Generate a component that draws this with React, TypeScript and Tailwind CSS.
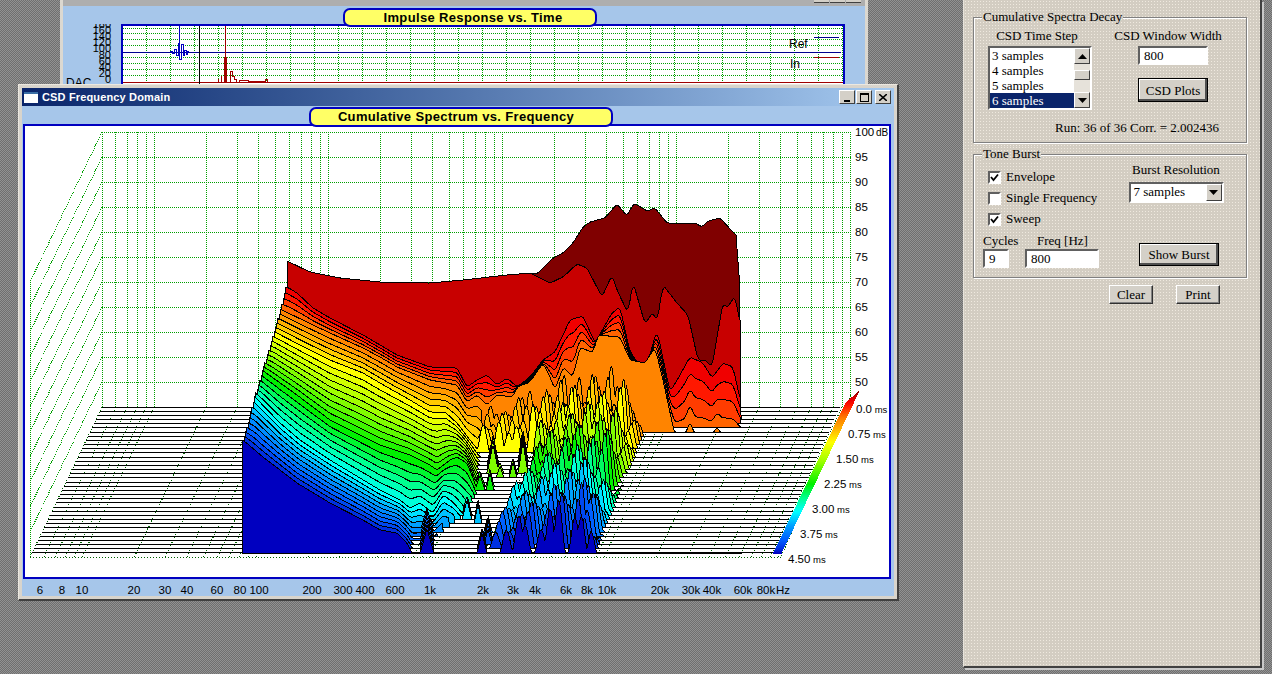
import type { ReactNode } from "react";

type Pt = [number, number];

const BLUE_DITHER = "bg-[#a6c6ea]";
const PANEL_BG =
  "bg-[radial-gradient(#efe9df_0.6px,#d3cdc2_0.6px)] bg-[length:3px_3px]";
const SERIF = "font-['Liberation_Serif',serif]";
const SANS = "font-['Liberation_Sans',sans-serif]";

/* ---------- waterfall data ---------- */

const floorY = (i: number) => 407 + i * 4.17;

// hand traced slices, screen coordinates
const KEYS: { i: number; pts: Pt[]; end: number }[] = [
  {
    i: 1,
    end: 740,
    pts: [
      [287, 261], [310, 272], [340, 278], [380, 282], [430, 283], [463, 280], [507, 275], [530, 273],
      [550, 283], [563, 277], [577, 264], [587, 268], [602, 297], [612, 275], [617, 290], [628, 313],
      [633, 282], [645, 324], [653, 312], [657, 322], [663, 285], [677, 303], [688, 315], [698, 360],
      [705, 360], [712, 367], [723, 302], [727, 308], [735, 296], [740, 323],
    ],
  },
  {
    i: 2,
    end: 741,
    pts: [
      [287, 287], [297, 293], [313, 308], [330, 318], [363, 335], [397, 355], [430, 367], [457, 368],
      [467, 387], [477, 380], [487, 375], [497, 385], [507, 378], [517, 387], [530, 377], [543, 360],
      [555, 352], [570, 320], [583, 316], [595, 343], [612, 313], [620, 307], [630, 352], [645, 372],
      [657, 330], [670, 392], [680, 375], [690, 357], [703, 363], [712, 378], [723, 363], [733, 367],
      [741, 403],
    ],
  },
  {
    i: 6,
    end: 741,
    pts: [
      [280, 309], [313, 325], [330, 333], [363, 348], [380, 357], [397, 367], [430, 380], [457, 385],
      [467, 402], [477, 395], [487, 405], [497, 395], [513, 397], [517, 387], [530, 382], [543, 363],
      [550, 377], [555, 390], [563, 367], [573, 377], [580, 347], [593, 353], [598, 335], [620, 337],
      [630, 360], [645, 363], [655, 347], [663, 380], [668, 403], [675, 436], [685, 436], [690, 420],
      [695, 436], [712, 436], [717, 426], [722, 436], [741, 436],
    ],
  },
  {
    i: 11,
    end: 482,
    pts: [
      [273, 331], [300, 345], [330, 360], [363, 373], [380, 383], [410, 400], [430, 412], [445, 412],
      [457, 423], [470, 440], [482, 455],
    ],
  },
  {
    i: 20,
    end: 478,
    pts: [
      [262, 370], [297, 395], [330, 420], [380, 445], [410, 455], [430, 465], [437, 470], [450, 460],
      [457, 457], [467, 463], [473, 478], [478, 492],
    ],
  },
  {
    i: 26,
    end: 466,
    pts: [
      [254, 396], [280, 423], [300, 440], [330, 460], [360, 478], [380, 490], [400, 500], [410, 508],
      [420, 503], [433, 513], [443, 495], [453, 502], [463, 514], [466, 520],
    ],
  },
  {
    i: 35,
    end: 414,
    pts: [
      [243, 440], [263, 457], [297, 483], [330, 503], [363, 520], [380, 530], [397, 533], [407, 543],
      [412, 553], [414, 556],
    ],
  },
];

const DARK_TOP: Pt[] = [
  [530, 273], [537, 274], [553, 258], [563, 253], [573, 243], [583, 227], [590, 222], [605, 218],
  [617, 204], [627, 216], [634, 203], [647, 211], [655, 208], [667, 223], [695, 223], [702, 227],
  [708, 221], [720, 218], [733, 232], [738, 237], [739, 300],
];

// isolated peaks standing on the floor: x, first slice, last slice, height, half width
const ISLANDS: [number, number, number, number, number][] = [
  [427, 30, 35, 24, 7], [482, 34, 35, 20, 5], [488, 30, 33, 16, 4], [480, 19, 20, 16, 5],
  [490, 19, 20, 18, 4], [493, 14, 16, 30, 6], [500, 16, 17, 12, 4], [513, 16, 17, 16, 4],
  [523, 13, 16, 32, 5], [467, 26, 27, 20, 5], [478, 27, 28, 20, 4], [430, 29, 29, 10, 5],
];

const STOPS: [number, number[]][] = [
  [0, [128, 0, 0]], [1, [200, 0, 0]], [2, [240, 0, 0]], [3, [255, 24, 0]], [4, [255, 60, 0]],
  [5, [255, 100, 0]], [6, [255, 132, 0]], [8, [255, 176, 0]], [11, [255, 255, 0]], [15, [160, 255, 0]],
  [20, [0, 240, 0]], [23, [0, 255, 144]], [26, [0, 255, 255]], [29, [0, 160, 255]], [32, [0, 96, 255]],
  [34, [0, 48, 224]], [35, [0, 0, 192]],
];

function sliceColor(t: number) {
  for (let k = 1; k < STOPS.length; k++) {
    if (t <= STOPS[k][0]) {
      const [a, ca] = STOPS[k - 1];
      const [b, cb] = STOPS[k];
      const f = (t - a) / (b - a);
      const c = ca.map((v, n) => Math.round(v + (cb[n] - v) * f));
      return `rgb(${c[0]},${c[1]},${c[2]})`;
    }
  }
  return "rgb(0,0,192)";
}

function sample(pts: Pt[], x: number) {
  if (x <= pts[0][0]) return pts[0][1];
  for (let k = 1; k < pts.length; k++) {
    if (x <= pts[k][0]) {
      const f = (x - pts[k - 1][0]) / (pts[k][0] - pts[k - 1][0]);
      return pts[k - 1][1] + (pts[k][1] - pts[k - 1][1]) * f;
    }
  }
  return pts[pts.length - 1][1];
}

// traced points are sparse, so round them off a little
const smooth = (pts: Pt[], x: number) =>
  (sample(pts, x - 2) + sample(pts, x - 1) + sample(pts, x) + sample(pts, x + 1) + sample(pts, x + 2)) / 5;

const clamp01 = (v: number) => Math.max(0, Math.min(1, v));

function surfaceY(i: number, x: number) {
  let a = KEYS[0];
  let b = KEYS[KEYS.length - 1];
  for (let k = 0; k < KEYS.length - 1; k++) {
    if (i >= KEYS[k].i && i <= KEYS[k + 1].i) {
      a = KEYS[k];
      b = KEYS[k + 1];
      break;
    }
  }
  const f = (i - a.i) / (b.i - a.i);
  const end = i > 6 && i < 11 ? 482 : a.end + (b.end - a.end) * f;
  if (x > end) return 999;
  const ya = smooth(a.pts, x);
  return ya + (smooth(b.pts, x) - ya) * f;
}

// rows of peaks that run up and to the right across the slices
function spikeHeight(i: number, x: number) {
  if (i < 7) return 0;
  const right = 597 + 1.66 * (35 - i);
  let h = 0;
  if (x <= right) {
    const fade = clamp01((right - x) / 14);
    const bound = i <= 11 ? 478 : 493 + (35 - i) * 2.2;
    for (let k = 0; k < 21; k++) {
      const p = 385 + k * 11 + Math.sin(k * 2.3) * 3 + (35 - i) * 3.3;
      const d = Math.abs(x - p);
      if (d > 7.5 || p < bound) continue;
      const wobble = 0.74 + 0.26 * Math.sin(i * 0.9 + k * 1.7);
      const env = (i <= 11 ? 30 : 24) + 40 * clamp01((p - 490) / 90);
      const bump = 0.5 * (1 + Math.cos((Math.PI * d) / 7.5));
      h = Math.max(h, env * wobble * fade * bump);
    }
  }
  for (const [px, i0, i1, ph, w] of ISLANDS) {
    if (i >= i0 && i <= i1 && Math.abs(x - px) < w) {
      h = Math.max(h, ph * (1 - Math.abs(x - px) / w));
    }
  }
  return h;
}

function slicePath(i: number) {
  const floor = floorY(i);
  const left = i === 0 ? 530 : 287 - 1.3 * (i - 1);
  const right = i === 0 ? 739 : i < 6 ? 739 + i : 742;
  let d = `M${left} ${floor.toFixed(1)}`;
  for (let x = left; x <= right; x += 1) {
    const s = i === 0 ? smooth(DARK_TOP, x) : surfaceY(i, x);
    const y = Math.min(s, floor - spikeHeight(i, x), floor);
    d += `L${x.toFixed(1)} ${y.toFixed(1)}`;
  }
  d += `L${right} ${floor.toFixed(1)}Z`;
  return d;
}

/* ---------- plot grid ---------- */

const MULTIPLES = [1, 2, 3, 4, 5, 6, 7, 8, 9];
const FREQ_X: number[] = [102, 115.8, 127, 137, 146];
for (let dec = 0; dec < 4; dec++) {
  for (const m of MULTIPLES) {
    FREQ_X.push(154 + 174 * dec + 174 * Math.log10(m));
  }
}
FREQ_X.push(850);

const WALL_Y = [132, 157, 182, 207, 232, 257, 282, 307, 332, 357, 382];
const DB_LABELS = ["100", "95", "90", "85", "80", "75", "70", "65", "60", "55", "50"];
const TIME_LABELS = ["0.0", "0.75", "1.50", "2.25", "3.00", "3.75", "4.50"];
const TIME_X = [856, 848, 836, 824, 812, 800, 788];
const FREQ_LABELS: [string, number][] = [
  ["6", 40], ["8", 62], ["10", 82], ["20", 134], ["30", 165], ["40", 187], ["60", 217], ["80", 240],
  ["100", 259], ["200", 312], ["300", 343], ["400", 365], ["600", 395], ["1k", 430], ["2k", 483],
  ["3k", 513], ["4k", 535], ["6k", 566], ["8k", 587], ["10k", 607], ["20k", 660], ["30k", 691],
  ["40k", 712], ["60k", 743], ["80k", 766], ["Hz", 783],
];

const SLICES = Array.from({ length: 36 }, (_, i) => i);
const RAMP = Array.from({ length: 163 }, (_, n) => n);

function CsdChart() {
  return (
    <svg viewBox="25 126 864 451" className="block h-[451px] w-[864px]" shapeRendering="crispEdges">
      <g stroke="#00a000" strokeDasharray="1 1" fill="none">
        {WALL_Y.map((y) => (
          <path key={y} d={`M102 ${y}H852M102 ${y}L30 ${y + 150}`} />
        ))}
        {FREQ_X.map((x) => (
          <path key={x} d={`M${x} 132V407`} />
        ))}
        <path d="M30 282V557" />
      </g>
      <g stroke="#006000" strokeDasharray="1 2" fill="none">
        {FREQ_X.map((x) => (
          <path key={x} d={`M${x} 407L${x - 72} 557`} />
        ))}
        <path d="M30 557H781M851 395L781 557M102 407L30 557" />
      </g>
      {SLICES.map((i) => (
        <path
          key={i}
          d={`M${102 - 2 * i} ${floorY(i)}H${840 - 1.9 * i}`}
          stroke="#000"
          fill="none"
        />
      ))}
      {SLICES.map((i) => (
        <path key={i} d={slicePath(i)} fill={sliceColor(i)} stroke="#000" strokeWidth="1" />
      ))}
      {RAMP.map((n) => {
        const y = 391 + n;
        const x = 773 + (553 - y) * 0.48;
        const cut = n < 12 ? 12 - n : 0;
        return (
          <rect key={n} x={x + cut * 0.6} y={y} width={8.5 - cut * 0.6} height="1" fill={sliceColor((n / 162) * 35)} />
        );
      })}
      <g fontFamily="'Liberation Sans',sans-serif" fontSize="11.5" fill="#000" shapeRendering="auto">
        {DB_LABELS.map((t, n) => (
          <text key={t} x="855" y={136 + n * 25}>
            {t}
          </text>
        ))}
        <text x="876" y="136" fontSize="10">
          dB
        </text>
        {TIME_LABELS.map((t, n) => (
          <text key={t} x={TIME_X[n]} y={413 + n * 25}>
            {t}
            <tspan fontSize="9.5"> ms</tspan>
          </text>
        ))}
      </g>
    </svg>
  );
}

function BackChart() {
  const vx = Array.from({ length: 30 }, (_, n) => 146.5 + n * 24);
  const hy = [28, 33, 39, 45, 57, 63, 69, 75];
  return (
    <svg viewBox="123 26 720 58" className="block h-[58px] w-[720px]" shapeRendering="crispEdges">
      <g stroke="#00a000" strokeDasharray="1 1" fill="none">
        {vx.map((x) => (
          <path key={x} d={`M${x} 26V84`} />
        ))}
        {hy.map((y) => (
          <path key={y} d={`M123 ${y}H843`} />
        ))}
      </g>
      <path d="M123 52H841" stroke="#000090" fill="none" />
      <path d="M123 82H843" stroke="#a00000" fill="none" />
      <path d="M199 26V84" stroke="#000" fill="none" />
      <path
        d="M170 52V51H172V53H174V49H176V55H178V43H179V26H179V59H181V44H183V55H184V50H186V54H187V51H188V52"
        stroke="#0000c0"
        fill="none"
      />
      <path
        d="M225 26V82M224 57V82M226 57V82M218 82V79M221 82V76M230 82V71H232V76H234V79H236V82M239 82V80H248V81H265V79H267V82"
        stroke="#a00000"
        fill="none"
      />
      <path d="M814 37H839" stroke="#000090" fill="none" />
      <path d="M814 57H839" stroke="#a00000" fill="none" />
      <g fontFamily="'Liberation Sans',sans-serif" fontSize="12" fill="#000" shapeRendering="auto">
        <text x="789" y="48">
          Ref
        </text>
        <text x="790" y="68">
          In
        </text>
      </g>
    </svg>
  );
}

/* ---------- window parts ---------- */

function Pill({ children, className }: { children: ReactNode; className: string }) {
  return (
    <div
      className={`relative z-10 flex items-center justify-center rounded-[7px] border-[2px] border-[#0000c0] bg-[#ffff66] text-[13px] font-bold tracking-[0.35px] text-black ${SANS} ${className}`}
    >
      {children}
    </div>
  );
}

function TitleButton({ children }: { children: ReactNode }) {
  return (
    <div className="flex h-[14px] w-[16px] items-center justify-center border border-t-white border-l-white border-r-[#404040] border-b-[#404040] bg-[#d4d0c8]">
      {children}
    </div>
  );
}

function Sunken({ className, children }: { className: string; children?: ReactNode }) {
  return (
    <div
      className={`border-2 border-t-[#606060] border-l-[#606060] border-r-white border-b-white bg-white text-black ${className}`}
    >
      {children}
    </div>
  );
}

function PanelButton({ label, className, strong }: { label: string; className: string; strong?: boolean }) {
  return (
    <div
      className={`flex items-center justify-center bg-[#d4d0c8] text-[13px] text-black ${
        strong
          ? "border border-black shadow-[inset_-2px_-2px_0_#505050,inset_1px_1px_0_#fff]"
          : "border border-t-white border-l-white border-r-[#303030] border-b-[#303030] shadow-[inset_-1px_-1px_0_#808080]"
      } ${className}`}
    >
      {label}
    </div>
  );
}

function Arrow({ up }: { up?: boolean }) {
  return (
    <svg viewBox="0 0 9 5" className="h-[5px] w-[9px]">
      <polygon points={up ? "4.5,0 0,5 9,5" : "0,0 9,0 4.5,5"} fill="#000" />
    </svg>
  );
}

function ArrowButton({ up, className }: { up?: boolean; className: string }) {
  return (
    <div
      className={`flex items-center justify-center border border-t-white border-l-white border-r-[#404040] border-b-[#404040] bg-[#d4d0c8] ${className}`}
    >
      <Arrow up={up} />
    </div>
  );
}

function Check({ label, on }: { label: string; on?: boolean }) {
  return (
    <div className="flex h-[13px] items-center gap-[5px]">
      <div className="flex h-[13px] w-[13px] items-center justify-center border-2 border-t-[#606060] border-l-[#606060] border-r-white border-b-white bg-white">
        {on ? (
          <svg viewBox="0 0 9 9" className="h-[9px] w-[9px]">
            <path d="M1 4l2.5 3L8 1.5" fill="none" stroke="#000" strokeWidth="1.8" />
          </svg>
        ) : null}
      </div>
      <span className="-mt-[2px]">{label}</span>
    </div>
  );
}

function Group({ title, className, children }: { title: string; className: string; children: ReactNode }) {
  return (
    <div
      className={`relative border border-[#808080] shadow-[inset_1px_1px_0_#fff,1px_1px_0_#fff] ${className}`}
    >
      <span className={`absolute left-[8px] top-[-9px] px-[1px] leading-[15px] ${PANEL_BG}`}>{title}</span>
      {children}
    </div>
  );
}

const SAMPLES = ["3 samples", "4 samples", "5 samples", "6 samples"];

function SidePanel() {
  return (
    <div
      className={`absolute left-[963px] top-0 h-[668px] w-[299px] border-r-[2px] border-b-[2px] border-l border-r-[#404040] border-b-[#404040] border-l-[#e8e4dc] pl-[9px] pt-[17px] text-[13px] leading-[15px] text-black shadow-[2px_2px_0_#c8c8c8] ${PANEL_BG} ${SERIF}`}
    >
      <Group title="Cumulative Spectra Decay" className="flex h-[126px] w-[274px] flex-col">
        <div className="flex pt-[10px]">
          <div className="ml-[14px] flex w-[104px] flex-col">
            <span className="h-[18px] pr-[6px] text-center">CSD Time Step</span>
            <Sunken className="flex h-[64px] w-[104px]">
              <div className="flex-1">
                {SAMPLES.map((s, n) => (
                  <div
                    key={s}
                    className={`h-[15px] pl-[2px] ${n === 3 ? "bg-[#0a246a] text-white" : ""}`}
                  >
                    {s}
                  </div>
                ))}
              </div>
              <div className="flex w-[16px] flex-col bg-[#e6e2da]">
                <ArrowButton up className="h-[16px]" />
                <div className="mt-[6px] h-[10px] border border-t-white border-l-white border-r-[#404040] border-b-[#404040] bg-[#d4d0c8]" />
                <ArrowButton className="mt-auto h-[16px]" />
              </div>
            </Sunken>
          </div>
          <div className="ml-[46px] flex w-[70px] flex-col items-center">
            <span className="-ml-[10px] h-[18px] whitespace-nowrap">CSD Window Width</span>
            <Sunken className="h-[19px] w-[70px] pl-[4px] leading-[15px]">800</Sunken>
            <PanelButton label="CSD Plots" strong className="mt-[13px] h-[24px] w-[70px]" />
          </div>
        </div>
        <div className="mt-[10px] pl-[81px]">Run: 36 of 36 Corr. = 2.002436</div>
      </Group>

      <Group title="Tone Burst" className="mt-[11px] flex h-[124px] w-[274px] flex-col">
        <div className="flex h-[78px]">
          <div className="ml-[14px] flex w-[141px] flex-col gap-[8px] pt-[16px]">
            <Check label="Envelope" on />
            <Check label="Single Frequency" />
            <Check label="Sweep" on />
          </div>
          <div className="flex w-[94px] flex-col items-center pt-[7px]">
            <span className="h-[20px] whitespace-nowrap">Burst Resolution</span>
            <Sunken className="flex h-[21px] w-[95px] items-center pl-[3px]">
              <span className="-mt-[2px] flex-1">7 samples</span>
              <ArrowButton className="h-[17px] w-[16px]" />
            </Sunken>
          </div>
        </div>
        <div className="flex items-end">
          <div className="ml-[9px] flex w-[42px] flex-col">
            <span className="h-[16px]">Cycles</span>
            <Sunken className="h-[19px] w-[26px] pl-[4px]">9</Sunken>
          </div>
          <div className="flex w-[114px] flex-col">
            <span className="h-[16px] pl-[12px]">Freq [Hz]</span>
            <Sunken className="h-[19px] w-[74px] pl-[4px]">800</Sunken>
          </div>
          <PanelButton label="Show Burst" strong className="mb-[2px] h-[23px] w-[80px]" />
        </div>
      </Group>

      <div className="mt-[7px] flex w-[274px] gap-[23px] pl-[136px]">
        <PanelButton label="Clear" className="h-[19px] w-[44px]" />
        <PanelButton label="Print" className="h-[19px] w-[44px]" />
      </div>
    </div>
  );
}

const BACK_SCALE = [180, 160, 140, 120, 100, 80, 60, 40, 20, 0];

export default function App() {
  return (
    <div className="relative h-[674px] w-[1272px] overflow-hidden bg-[repeating-conic-gradient(#6f6f6f_0_25%,#929292_0_50%)] bg-[length:2px_2px]">
      {/* impulse response window, mostly behind the CSD one */}
      <div className={`absolute left-[60px] top-0 flex h-[84px] w-[808px] flex-col overflow-hidden border-x-[3px] border-x-[#dcd8d0] ${BLUE_DITHER}`}>
        <div className="flex h-[6px] shrink-0 justify-end gap-[1px] bg-[#aeaeae] pr-[3px]">
          <div className="h-[3px] w-[15px] border-b border-b-[#404040] bg-[#d4d0c8]" />
          <div className="h-[3px] w-[15px] border-b border-b-[#404040] bg-[#d4d0c8]" />
          <div className="mr-[1px] h-[3px] w-[15px] border-b border-b-[#404040] bg-[#d4d0c8]" />
        </div>
        <Pill className="ml-[280px] mt-[2px] h-[19px] w-[254px] shrink-0 pl-[6px]">Impulse Response vs. Time</Pill>
        <div className="-mt-[3px] flex flex-1">
          <svg viewBox="63 23 58 62" className="h-[62px] w-[58px] shrink-0">
            <g fontFamily="'Liberation Sans',sans-serif" fontSize="11" fill="#000">
              {BACK_SCALE.map((v, n) => (
                <text key={v} x="111" y={27 + n * 6.1} textAnchor="end">
                  {v}
                </text>
              ))}
              <text x="66" y="86" fontSize="12">
                DAC
              </text>
            </g>
          </svg>
          <div className="h-[70px] w-[724px] border-2 border-[#0000c0] bg-white">
            <BackChart />
          </div>
        </div>
      </div>

      {/* CSD window */}
      <div className="absolute left-[18px] top-[84px] h-[517px] w-[881px] border border-r-[2px] border-b-[2px] border-t-[#ece8e0] border-l-[#ece8e0] border-r-[#404040] border-b-[#404040]">
        <div className={`flex h-full w-full flex-col border-[3px] border-[#d8d4cc] ${BLUE_DITHER}`}>
          <div className="flex h-[18px] shrink-0 items-center bg-gradient-to-r from-[#0a246a] to-[#a6caf0] pl-[2px] pr-[3px]">
            <div className="h-[11px] w-[14px] border-t-2 border-t-[#3a6ea5] bg-white" />
            <span className={`ml-[4px] flex-1 text-[11px] font-bold tracking-[0.15px] text-white ${SANS}`}>
              CSD Frequency Domain
            </span>
            <div className="flex gap-[1px]">
              <TitleButton>
                <div className="mt-[7px] h-[2px] w-[6px] bg-black" />
              </TitleButton>
              <div className="mr-[2px]">
                <TitleButton>
                  <div className="h-[9px] w-[9px] border border-t-2 border-black" />
                </TitleButton>
              </div>
              <TitleButton>
                <svg viewBox="0 0 8 7" className="h-[7px] w-[8px]">
                  <path d="M0 0L8 7M8 0L0 7" stroke="#000" strokeWidth="1.6" />
                </svg>
              </TitleButton>
            </div>
          </div>
          <Pill className="-mb-[3px] ml-[287px] mt-[1px] h-[20px] w-[304px] shrink-0 pr-[10px]">
            Cumulative Spectrum vs. Frequency
          </Pill>
          <div className="ml-[1px] h-[455px] w-[868px] shrink-0 border-2 border-[#0000c0] bg-white">
            <CsdChart />
          </div>
          <svg viewBox="22 579 872 17" className="block h-[17px] w-[872px] shrink-0">
            <g fontFamily="'Liberation Sans',sans-serif" fontSize="11.5" fill="#000" textAnchor="middle">
              {FREQ_LABELS.map(([t, x]) => (
                <text key={t} x={x} y="594">
                  {t}
                </text>
              ))}
            </g>
          </svg>
        </div>
      </div>

      <SidePanel />
    </div>
  );
}
